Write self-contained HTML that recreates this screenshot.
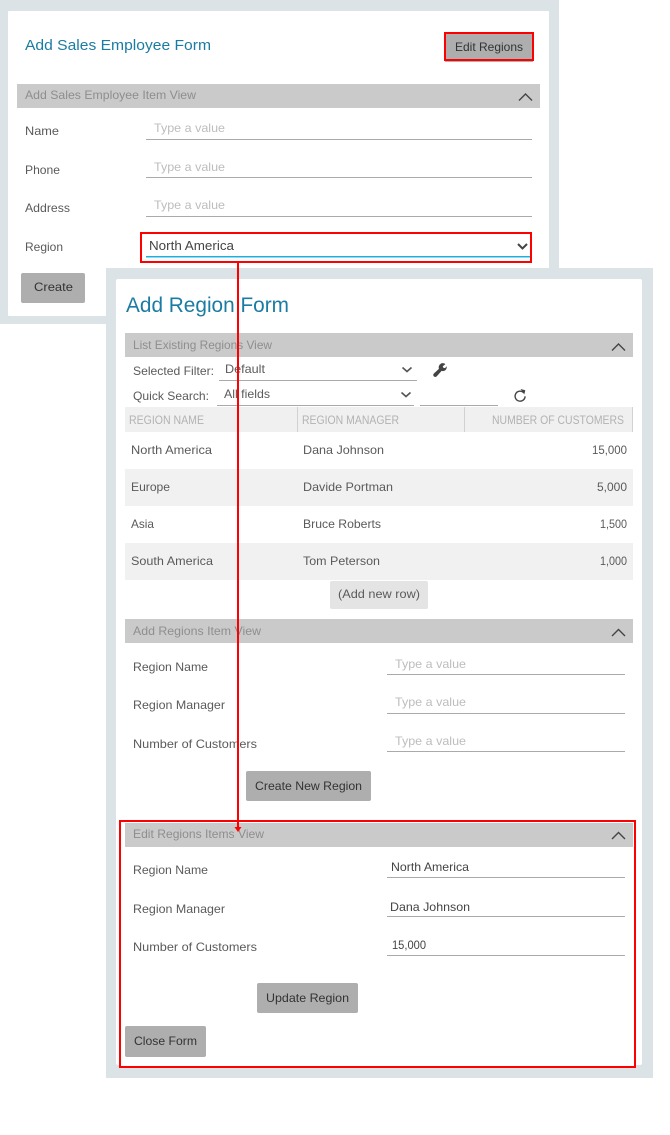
<!DOCTYPE html>
<html>
<head>
<meta charset="utf-8">
<style>
html,body{margin:0;padding:0;background:#fff}
svg{display:block}
text{font-family:"Liberation Sans",sans-serif;font-size:12px;fill:#5a5a5a}
.t{fill:#1b7ca3}
.h{fill:#8e8e8e}
.p{fill:#bdbdbd}
.d{fill:#333}
.th{fill:#b2b2b2;font-size:11.5px}
.c{fill:none;stroke:#444;stroke-width:1.4}
.l{fill:#aaa}
</style>
</head>
<body>
<svg xmlns="http://www.w3.org/2000/svg" width="670" height="1135" viewBox="0 0 670 1135">
<rect width="670" height="1135" fill="#fff"/>

<!-- Panel 1 -->
<rect x="0" y="0" width="559" height="324" fill="#dce3e6"/>
<rect x="8" y="11" width="541" height="305" rx="1" fill="#fff"/>
<text class="t" x="25" y="50" style="font-size:15px" textLength="186" lengthAdjust="spacingAndGlyphs">Add Sales Employee Form</text>
<rect x="445" y="33" width="88" height="29" fill="#aeaeae"/>
<rect x="445" y="33" width="88" height="27" fill="#aeaeae" stroke="#f00" stroke-width="2"/>
<text class="d" x="455" y="51" textLength="68" lengthAdjust="spacingAndGlyphs">Edit Regions</text>
<rect x="17" y="84" width="523" height="24" fill="#cacaca"/>
<text class="h" x="25" y="99" textLength="171" lengthAdjust="spacingAndGlyphs">Add Sales Employee Item View</text>
<path class="c" d="M519 100.500l6.500-6.500 6.500 6.500"/>

<text x="25" y="135" textLength="34" lengthAdjust="spacingAndGlyphs">Name</text>
<text x="25" y="174" textLength="35" lengthAdjust="spacingAndGlyphs">Phone</text>
<text x="25" y="212" textLength="45" lengthAdjust="spacingAndGlyphs">Address</text>
<text x="25" y="251" textLength="38" lengthAdjust="spacingAndGlyphs">Region</text>
<text class="p" x="154" y="132" textLength="71" lengthAdjust="spacingAndGlyphs">Type a value</text>
<text class="p" x="154" y="171" textLength="71" lengthAdjust="spacingAndGlyphs">Type a value</text>
<text class="p" x="154" y="209" textLength="71" lengthAdjust="spacingAndGlyphs">Type a value</text>
<rect class="l" x="146" y="139" width="386" height="1"/>
<rect class="l" x="146" y="177" width="386" height="1"/>
<rect class="l" x="146" y="216" width="386" height="1"/>
<rect x="141" y="233" width="390" height="29" fill="#fff" stroke="#f00" stroke-width="2"/>
<text x="149" y="250" style="font-size:13px;fill:#444" textLength="85" lengthAdjust="spacingAndGlyphs">North America</text>
<rect x="146" y="256" width="384" height="1.5" fill="#1cb0e0"/>
<path d="M518 244l4.500 4.500 4.500-4.500" fill="none" stroke="#444" stroke-width="2"/>
<rect x="21" y="273" width="64" height="30" rx="2" fill="#aeaeae"/>
<text class="d" x="34" y="291" textLength="39" lengthAdjust="spacingAndGlyphs">Create</text>

<!-- Panel 2 -->
<rect x="106" y="268" width="547" height="810" fill="#dce3e6"/>
<rect x="116" y="279" width="526" height="786" rx="2" fill="#fff"/>
<text class="t" x="126" y="312" style="font-size:21px" textLength="163" lengthAdjust="spacingAndGlyphs">Add Region Form</text>

<rect x="125" y="333" width="508" height="24" fill="#cacaca"/>
<text class="h" x="133" y="349" textLength="139" lengthAdjust="spacingAndGlyphs">List Existing Regions View</text>
<path class="c" d="M612 350.500l6.500-6.500 6.500 6.500"/>

<text x="133" y="375" textLength="81" lengthAdjust="spacingAndGlyphs">Selected Filter:</text>
<text x="225" y="373" textLength="40" lengthAdjust="spacingAndGlyphs">Default</text>
<rect class="l" x="219" y="380" width="198" height="1"/>
<path d="M402.500 367.500l4.500 4 4.500-4" fill="none" stroke="#555" stroke-width="1.600"/>
<path d="M440.500 363.500c2-.8 4.200-.3 4.800.7l-2.500 2 .5 1.600 1.800.3 1.500-1.800c.5 1.900-.5 4-2.400 4.600-1 .3-1.800.2-2.600 0l-4.800 5.400c-.9.900-2.300.9-3 0-.8-.8-.7-2 .1-2.800l5-4.600c-.6-2.500.2-4.500 2.600-5.400z" fill="#444"/>

<text x="133" y="400" textLength="76" lengthAdjust="spacingAndGlyphs">Quick Search:</text>
<text x="224" y="398" textLength="46" lengthAdjust="spacingAndGlyphs">All fields</text>
<rect class="l" x="217" y="405" width="197" height="1"/>
<path d="M401.500 392.500l4.500 4 4.500-4" fill="none" stroke="#555" stroke-width="1.600"/>
<rect class="l" x="420" y="405" width="78" height="1"/>
<path d="M523.500 392.500a5 5 0 1 0 1.600 3.800" fill="none" stroke="#444" stroke-width="1.400"/>
<path d="M520.500 389l4.800 1.200-1 4.300z" fill="#444"/>

<rect x="125" y="407" width="508" height="25" fill="#f0f0f0"/>
<rect x="297" y="407" width="1" height="25" fill="#d2d2d2"/>
<rect x="464" y="407" width="1" height="25" fill="#d2d2d2"/>
<rect x="632" y="407" width="1" height="25" fill="#d2d2d2"/>
<text class="th" x="129" y="424" textLength="75" lengthAdjust="spacingAndGlyphs">REGION NAME</text>
<text class="th" x="302" y="424" textLength="97" lengthAdjust="spacingAndGlyphs">REGION MANAGER</text>
<text class="th" x="492" y="424" textLength="132" lengthAdjust="spacingAndGlyphs">NUMBER OF CUSTOMERS</text>

<rect x="125" y="469" width="508" height="37" fill="#f1f1f1"/>
<rect x="125" y="543" width="508" height="37" fill="#f1f1f1"/>
<text x="131" y="454" textLength="81" lengthAdjust="spacingAndGlyphs">North America</text>
<text x="303" y="454" textLength="81" lengthAdjust="spacingAndGlyphs">Dana Johnson</text>
<text x="592" y="454" textLength="35" lengthAdjust="spacingAndGlyphs">15,000</text>
<text x="131" y="491" textLength="39" lengthAdjust="spacingAndGlyphs">Europe</text>
<text x="303" y="491" textLength="90" lengthAdjust="spacingAndGlyphs">Davide Portman</text>
<text x="597" y="491" textLength="30" lengthAdjust="spacingAndGlyphs">5,000</text>
<text x="131" y="528" textLength="23" lengthAdjust="spacingAndGlyphs">Asia</text>
<text x="303" y="528" textLength="78" lengthAdjust="spacingAndGlyphs">Bruce Roberts</text>
<text x="600" y="528" textLength="27" lengthAdjust="spacingAndGlyphs">1,500</text>
<text x="131" y="565" textLength="82" lengthAdjust="spacingAndGlyphs">South America</text>
<text x="303" y="565" textLength="77" lengthAdjust="spacingAndGlyphs">Tom Peterson</text>
<text x="600" y="565" textLength="27" lengthAdjust="spacingAndGlyphs">1,000</text>
<rect x="330" y="581" width="98" height="28" rx="2" fill="#e4e4e4"/>
<text x="338" y="598" textLength="82" lengthAdjust="spacingAndGlyphs">(Add new row)</text>

<rect x="125" y="619" width="508" height="24" fill="#cacaca"/>
<text class="h" x="133" y="635" textLength="128" lengthAdjust="spacingAndGlyphs">Add Regions Item View</text>
<path class="c" d="M612 636l6.500-6.500 6.500 6.500"/>
<text x="133" y="671" textLength="75" lengthAdjust="spacingAndGlyphs">Region Name</text>
<text x="133" y="709" textLength="92" lengthAdjust="spacingAndGlyphs">Region Manager</text>
<text x="133" y="748" textLength="124" lengthAdjust="spacingAndGlyphs">Number of Customers</text>
<text class="p" x="395" y="668" textLength="71" lengthAdjust="spacingAndGlyphs">Type a value</text>
<text class="p" x="395" y="706" textLength="71" lengthAdjust="spacingAndGlyphs">Type a value</text>
<text class="p" x="395" y="745" textLength="71" lengthAdjust="spacingAndGlyphs">Type a value</text>
<rect class="l" x="387" y="674" width="238" height="1"/>
<rect class="l" x="387" y="713" width="238" height="1"/>
<rect class="l" x="387" y="751" width="238" height="1"/>
<rect x="246" y="771" width="125" height="30" rx="2" fill="#aeaeae"/>
<text class="d" x="255" y="790" textLength="107" lengthAdjust="spacingAndGlyphs">Create New Region</text>

<rect x="120" y="821" width="515" height="246" fill="#fff" stroke="#f00" stroke-width="2"/>
<rect x="125" y="823" width="508" height="24" fill="#cacaca"/>
<text class="h" x="133" y="838" textLength="131" lengthAdjust="spacingAndGlyphs">Edit Regions Items View</text>
<path class="c" d="M612 839l6.500-6.500 6.500 6.500"/>
<text x="133" y="874" textLength="75" lengthAdjust="spacingAndGlyphs">Region Name</text>
<text x="133" y="913" textLength="92" lengthAdjust="spacingAndGlyphs">Region Manager</text>
<text x="133" y="951" textLength="124" lengthAdjust="spacingAndGlyphs">Number of Customers</text>
<text x="391" y="871" style="fill:#444" textLength="78" lengthAdjust="spacingAndGlyphs">North America</text>
<text x="390" y="911" style="fill:#444" textLength="80" lengthAdjust="spacingAndGlyphs">Dana Johnson</text>
<text x="392" y="949" style="fill:#444" textLength="34" lengthAdjust="spacingAndGlyphs">15,000</text>
<rect class="l" x="387" y="877" width="238" height="1"/>
<rect class="l" x="387" y="916" width="238" height="1"/>
<rect class="l" x="387" y="955" width="238" height="1"/>
<rect x="257" y="983" width="101" height="30" rx="2" fill="#aeaeae"/>
<text class="d" x="266" y="1002" textLength="83" lengthAdjust="spacingAndGlyphs">Update Region</text>
<rect x="125" y="1026" width="81" height="31" rx="2" fill="#aeaeae"/>
<text class="d" x="134" y="1045" textLength="63" lengthAdjust="spacingAndGlyphs">Close Form</text>

<!-- connector -->
<rect x="237" y="263" width="2" height="566" fill="#f00"/>
<path d="M234.500 827h7l-3.500 5z" fill="#f00"/>
</svg>
</body>
</html>
